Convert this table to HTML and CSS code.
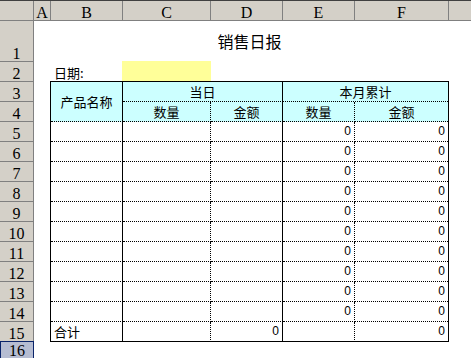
FILE: index.html
```html
<!DOCTYPE html>
<html lang="zh-CN">
<head>
<meta charset="utf-8">
<title>销售日报</title>
<link rel="stylesheet" href="styles.css">
</head>
<body>
<div class="app">
  <div class="col-header">
    <div class="hcell corner"></div>
    <div class="hcell w-a">A</div>
    <div class="hcell w-b">B</div>
    <div class="hcell w-c">C</div>
    <div class="hcell w-d">D</div>
    <div class="hcell w-e">E</div>
    <div class="hcell w-f">F</div>
    <div class="hcell w-g"></div>
  </div>
  <div class="main">
    <div class="row-header">
      <div class="rh tall">1</div>
      <div class="rh">2</div>
      <div class="rh">3</div>
      <div class="rh">4</div>
      <div class="rh">5</div>
      <div class="rh">6</div>
      <div class="rh">7</div>
      <div class="rh">8</div>
      <div class="rh">9</div>
      <div class="rh">10</div>
      <div class="rh">11</div>
      <div class="rh">12</div>
      <div class="rh">13</div>
      <div class="rh">14</div>
      <div class="rh">15</div>
      <div class="rh sel">16</div>
    </div>
    <div class="sheet">
      <div class="title-row">销售日报</div>
      <div class="date-row">
        <div class="date-label">日期:</div>
        <div class="date-input"></div>
      </div>
      <div class="report">
        <div class="c hd sr span-r">产品名称</div>
        <div class="c hd sr span-c">当日</div>
        <div class="c hd span-c">本月累计</div>
        <div class="c hd dr">数量</div>
        <div class="c hd sr">金额</div>
        <div class="c hd dr">数量</div>
        <div class="c hd">金额</div>

        <div class="c sr"></div><div class="c dr"></div><div class="c sr"></div><div class="c dr num">0</div><div class="c num">0</div>
        <div class="c sr"></div><div class="c dr"></div><div class="c sr"></div><div class="c dr num">0</div><div class="c num">0</div>
        <div class="c sr"></div><div class="c dr"></div><div class="c sr"></div><div class="c dr num">0</div><div class="c num">0</div>
        <div class="c sr"></div><div class="c dr"></div><div class="c sr"></div><div class="c dr num">0</div><div class="c num">0</div>
        <div class="c sr"></div><div class="c dr"></div><div class="c sr"></div><div class="c dr num">0</div><div class="c num">0</div>
        <div class="c sr"></div><div class="c dr"></div><div class="c sr"></div><div class="c dr num">0</div><div class="c num">0</div>
        <div class="c sr"></div><div class="c dr"></div><div class="c sr"></div><div class="c dr num">0</div><div class="c num">0</div>
        <div class="c sr"></div><div class="c dr"></div><div class="c sr"></div><div class="c dr num">0</div><div class="c num">0</div>
        <div class="c sr"></div><div class="c dr"></div><div class="c sr"></div><div class="c dr num">0</div><div class="c num">0</div>
        <div class="c sr"></div><div class="c dr"></div><div class="c sr"></div><div class="c dr num">0</div><div class="c num">0</div>

        <div class="c sr tot label">合计</div><div class="c dr tot"></div><div class="c sr tot num">0</div><div class="c dr tot"></div><div class="c tot num">0</div>
      </div>
    </div>
  </div>
</div>
</body>
</html>
```
FILE: styles.css
```css
* {
  box-sizing: border-box;
}

html,
body {
  margin: 0;
  padding: 0;
  background: #ffffff;
}

body {
  width: 471px;
  height: 358px;
  overflow: hidden;
  font-family: "Noto Sans CJK SC", sans-serif;
  color: #000000;
}

.app {
  display: flex;
  flex-direction: column;
  height: 358px;
}

/* column header bar */
.col-header {
  display: flex;
  height: 21px;
  background: #d4d0c8;
  border-top: 1px solid #404040;
  border-bottom: 1px solid #808080;
}

.hcell {
  display: flex;
  align-items: flex-end;
  justify-content: center;
  border-right: 1px solid #808080;
  font-family: "Liberation Serif", serif;
  font-size: 16px;
  line-height: 14px;
}

.corner { width: 34px; }
.w-a { width: 17px; }
.w-b { width: 72px; }
.w-c { width: 88px; }
.w-d { width: 72px; }
.w-e { width: 72px; }
.w-f { width: 94px; }
.w-g { flex: 1; border-right: none; }

/* body area */
.main {
  display: flex;
  flex: 1;
}

.row-header {
  display: flex;
  flex-direction: column;
  width: 34px;
  background: #d4d0c8;
}

.rh {
  display: flex;
  align-items: flex-end;
  justify-content: center;
  height: 20px;
  border-bottom: 1px solid #808080;
  border-right: 1px solid #808080;
  font-family: "Liberation Serif", serif;
  font-size: 16px;
  line-height: 14px;
}

.rh.tall {
  height: 41px;
}

.rh.sel {
  flex: 1;
  margin-top: -1px;
  align-items: flex-start;
  padding-top: 2px;
  background: #b6bdd2;
  border: 1px solid #0a246a;
  border-bottom: none;
}

.sheet {
  display: flex;
  flex-direction: column;
  padding-left: 16px;
}

.title-row {
  display: flex;
  align-items: center;
  justify-content: center;
  width: 399px;
  height: 40px;
  font-size: 16px;
  line-height: 16px;
}

.date-row {
  display: flex;
  height: 20px;
}

.date-label {
  display: flex;
  align-items: flex-end;
  width: 72px;
  padding-left: 4px;
  padding-bottom: 2px;
  font-size: 13px;
  line-height: 13px;
}

.date-input {
  width: 89px;
  background: #ffff99;
}

/* report table */
.report {
  display: grid;
  width: 399px;
  grid-template-columns: 72px 88px 72px 72px 93px;
  grid-auto-rows: 20px;
  border: 1px solid #000000;
  border-bottom: none;
}

.c {
  border-bottom: 1px dotted #000000;
  font-size: 13px;
  line-height: 19px;
  white-space: nowrap;
}

.sr {
  border-right: 1px solid #000000;
}

.dr {
  border-right: 1px dotted #000000;
}

.hd {
  background: #ccffff;
  text-align: center;
}

.span-r {
  grid-row: span 2;
  display: flex;
  align-items: center;
  justify-content: center;
}

.span-c {
  grid-column: span 2;
}

.num {
  text-align: right;
  padding-right: 3px;
  font-family: "Liberation Sans", sans-serif;
  font-size: 12px;
}

.label {
  padding-left: 3px;
}

.tot {
  border-bottom: 1px solid #000000;
}
```
